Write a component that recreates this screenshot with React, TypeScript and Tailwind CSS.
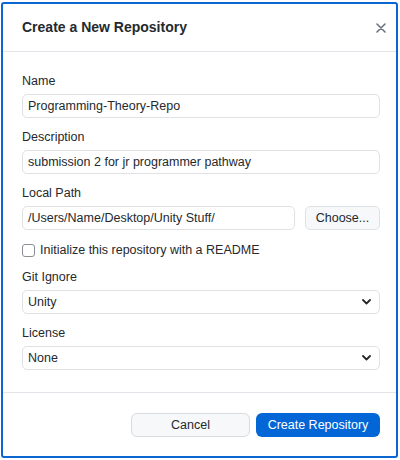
import React from "react";

const font = { fontFamily: '"Liberation Sans", Arial, sans-serif' };

function Field({ label, children }: { label: string; children: React.ReactNode }) {
  return (
    <div className="mb-[11px]">
      <div className="h-4 mb-[5px] text-[12.5px] leading-4 text-[#24292e]">{label}</div>
      {children}
    </div>
  );
}

function TextInput({ value }: { value: string }) {
  return (
    <div className="h-6 flex items-center px-[5px] rounded-[5px] border border-[#dfe2e5] bg-white text-[12.5px] text-[#24292e] flex-1">
      {value}
    </div>
  );
}

function Select({ value }: { value: string }) {
  return (
    <div className="h-6 flex items-center justify-between pl-[5px] pr-[8px] rounded-[5px] border border-[#dfe2e5] bg-white text-[12.5px] text-[#24292e]">
      <span>{value}</span>
      <svg width="9" height="6" viewBox="0 0 9 6">
        <path d="M1 1l3.5 3.5L8 1" fill="none" stroke="#24292e" strokeWidth="1.8" strokeLinecap="round" strokeLinejoin="round" />
      </svg>
    </div>
  );
}

export default function App() {
  return (
    <div className="min-h-[460px] bg-white pl-[1px] pt-[2px]" style={font}>
      <div className="w-[397px] h-[456px] border-2 border-[#0a66d2] rounded-[3px] bg-white flex flex-col">
        <div className="h-[48px] flex items-center justify-between pl-[19px] pr-[10px] border-b border-[#e1e4e8]">
          <h1 className="text-[14px] font-bold text-[#24292e]">Create a New Repository</h1>
          <svg width="10" height="10" viewBox="0 0 10 10">
            <path d="M1 1l8 8M9 1l-8 8" stroke="#6a737d" strokeWidth="1.6" strokeLinecap="round" />
          </svg>
        </div>
        <div className="pl-[19px] pr-[16px] pt-[21px] flex-1 border-b border-[#e1e4e8]">
          <Field label="Name">
            <TextInput value="Programming-Theory-Repo" />
          </Field>
          <Field label="Description">
            <TextInput value="submission 2 for jr programmer pathway" />
          </Field>
          <Field label="Local Path">
            <div className="flex gap-[10px]">
              <TextInput value="/Users/Name/Desktop/Unity Stuff/" />
              <button className="h-6 w-[75px] rounded-[5px] border border-[#dfe2e5] bg-[#f6f8fa] text-[12.5px] text-[#24292e]">
                Choose...
              </button>
            </div>
          </Field>
          <div className="h-4 mt-[12px] mb-[11px] flex items-center gap-[5px] text-[12.5px] text-[#24292e]">
            <span className="w-[13px] h-[13px] rounded-[3px] border border-[#8a8f95] bg-white" />
            <span>Initialize this repository with a README</span>
          </div>
          <Field label="Git Ignore">
            <Select value="Unity" />
          </Field>
          <Field label="License">
            <Select value="None" />
          </Field>
        </div>
        <div className="h-[63px] flex justify-end items-start gap-[6px] pt-[20px] pr-[16px]">
          <button className="h-6 w-[119px] rounded-[6px] border border-[#d8dbdf] bg-[#f6f8fa] text-[12.5px] text-[#24292e]">
            Cancel
          </button>
          <button className="h-6 w-[124px] rounded-[6px] bg-[#0366d6] text-[12.5px] text-white">
            Create Repository
          </button>
        </div>
      </div>
    </div>
  );
}
